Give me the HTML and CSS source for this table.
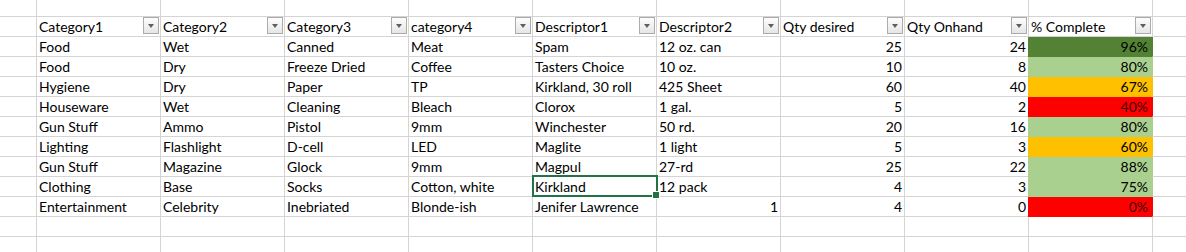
FILE: index.html
```html
<!DOCTYPE html>
<html>
<head>
<meta charset="utf-8">
<link rel="stylesheet" href="styles.css">
</head>
<body>
<div class="sheet">
  <div class="c rh"></div><div class="c"></div><div class="c"></div><div class="c"></div><div class="c"></div><div class="c"></div><div class="c"></div><div class="c"></div><div class="c"></div><div class="c"></div><div class="c"></div>

  <div class="c rh"></div>
  <div class="c hd"><span>Category1</span><i class="fb"></i></div>
  <div class="c hd"><span>Category2</span><i class="fb"></i></div>
  <div class="c hd"><span>Category3</span><i class="fb"></i></div>
  <div class="c hd"><span>category4</span><i class="fb"></i></div>
  <div class="c hd"><span>Descriptor1</span><i class="fb"></i></div>
  <div class="c hd"><span>Descriptor2</span><i class="fb"></i></div>
  <div class="c hd"><span>Qty desired</span><i class="fb"></i></div>
  <div class="c hd"><span>Qty Onhand</span><i class="fb"></i></div>
  <div class="c hd"><span>% Complete</span><i class="fb"></i></div>
  <div class="c"></div>

  <div class="c rh"></div><div class="c">Food</div><div class="c">Wet</div><div class="c">Canned</div><div class="c">Meat</div><div class="c">Spam</div><div class="c">12 oz. can</div><div class="c n">25</div><div class="c n">24</div><div class="c p dark">96%</div><div class="c after-dark"></div>

  <div class="c rh"></div><div class="c">Food</div><div class="c">Dry</div><div class="c">Freeze Dried</div><div class="c">Coffee</div><div class="c">Tasters Choice</div><div class="c">10 oz.</div><div class="c n">10</div><div class="c n">8</div><div class="c p light">80%</div><div class="c after-light"></div>

  <div class="c rh"></div><div class="c">Hygiene</div><div class="c">Dry</div><div class="c">Paper</div><div class="c">TP</div><div class="c">Kirkland, 30 roll</div><div class="c">425 Sheet</div><div class="c n">60</div><div class="c n">40</div><div class="c p amber">67%</div><div class="c after-amber"></div>

  <div class="c rh"></div><div class="c">Houseware</div><div class="c">Wet</div><div class="c">Cleaning</div><div class="c">Bleach</div><div class="c">Clorox</div><div class="c">1 gal.</div><div class="c n">5</div><div class="c n">2</div><div class="c p red">40%</div><div class="c after-red"></div>

  <div class="c rh"></div><div class="c">Gun Stuff</div><div class="c">Ammo</div><div class="c">Pistol</div><div class="c">9mm</div><div class="c">Winchester</div><div class="c">50 rd.</div><div class="c n">20</div><div class="c n">16</div><div class="c p light">80%</div><div class="c after-light"></div>

  <div class="c rh"></div><div class="c">Lighting</div><div class="c">Flashlight</div><div class="c">D-cell</div><div class="c">LED</div><div class="c">Maglite</div><div class="c">1 light</div><div class="c n">5</div><div class="c n">3</div><div class="c p amber">60%</div><div class="c after-amber"></div>

  <div class="c rh"></div><div class="c">Gun Stuff</div><div class="c">Magazine</div><div class="c">Glock</div><div class="c">9mm</div><div class="c">Magpul</div><div class="c">27-rd</div><div class="c n">25</div><div class="c n">22</div><div class="c p light">88%</div><div class="c after-light"></div>

  <div class="c rh"></div><div class="c">Clothing</div><div class="c">Base</div><div class="c">Socks</div><div class="c">Cotton, white</div><div class="c sel">Kirkland</div><div class="c">12 pack</div><div class="c n">4</div><div class="c n">3</div><div class="c p light">75%</div><div class="c after-light"></div>

  <div class="c rh"></div><div class="c">Entertainment</div><div class="c">Celebrity</div><div class="c">Inebriated</div><div class="c">Blonde-ish</div><div class="c">Jenifer Lawrence</div><div class="c n">1</div><div class="c n">4</div><div class="c n">0</div><div class="c p red">0%</div><div class="c after-red"></div>

  <div class="c rh"></div><div class="c"></div><div class="c"></div><div class="c"></div><div class="c"></div><div class="c"></div><div class="c"></div><div class="c"></div><div class="c"></div><div class="c"></div><div class="c"></div>

  <div class="c rh"></div><div class="c"></div><div class="c"></div><div class="c"></div><div class="c"></div><div class="c"></div><div class="c"></div><div class="c"></div><div class="c"></div><div class="c"></div><div class="c"></div>
</div>
</body>
</html>
```

FILE: styles.css
```css
* { box-sizing: border-box; }
html, body { margin: 0; padding: 0; background: #fff; overflow: hidden; }
body { width: 1186px; height: 252px; }

.sheet {
  display: grid;
  grid-template-columns: 36px repeat(9, 124px) 34px;
  grid-template-rows: 17px;
  grid-auto-rows: 20px;
  font-family: Lato, "Liberation Sans", sans-serif;
  font-size: 14px;
  line-height: 17px;
  color: #000;
}

.c {
  display: flex;
  align-items: flex-end;
  padding: 0 2px 1px 2px;
  border-left: 1px solid #d4d4d4;
  border-bottom: 1px solid #d4d4d4;
  white-space: nowrap;
  overflow: visible;
}
.c.rh { border-left: none; }

.c.n { justify-content: flex-end; padding-right: 2px; }
.c.p { justify-content: flex-end; padding-right: 4px; }

.hd { justify-content: space-between; padding-right: 1px; }
.hd span { align-self: flex-end; }

.fb {
  align-self: flex-start;
  flex: none;
  width: 16px;
  height: 17px;
  border: 1px solid #ababab;
  background: linear-gradient(#fdfdfd, #e6e6e6);
  display: flex;
  align-items: center;
  justify-content: center;
}
.fb::after {
  content: "";
  width: 0;
  height: 0;
  border-top: 4px solid #5f5f5f;
  border-left: 3.5px solid transparent;
  border-right: 3.5px solid transparent;
}

.dark { background: #548235; border-left-color: #548235; border-bottom-color: #548235; }
.light { background: #a9d08e; border-left-color: #a9d08e; border-bottom-color: #a9d08e; }
.amber { background: #ffc000; border-left-color: #ffc000; border-bottom-color: #ffc000; }
.red { background: #ff0000; border-left-color: #ff0000; border-bottom-color: #ff0000; color: #3a0000; }

.after-dark { border-left-color: #548235; }
.after-light { border-left-color: #a9d08e; }
.after-amber { border-left-color: #ffc000; }
.after-red { border-left-color: #ff0000; }

.sel { position: relative; }
.sel::before {
  content: "";
  position: absolute;
  top: -2px;
  left: -1px;
  right: -2px;
  bottom: -1px;
  border: 2px solid #217346;
  pointer-events: none;
}
.sel::after {
  content: "";
  position: absolute;
  right: -4px;
  bottom: -3px;
  width: 6px;
  height: 6px;
  background: #217346;
  border: 1px solid #fff;
  z-index: 2;
}
```
